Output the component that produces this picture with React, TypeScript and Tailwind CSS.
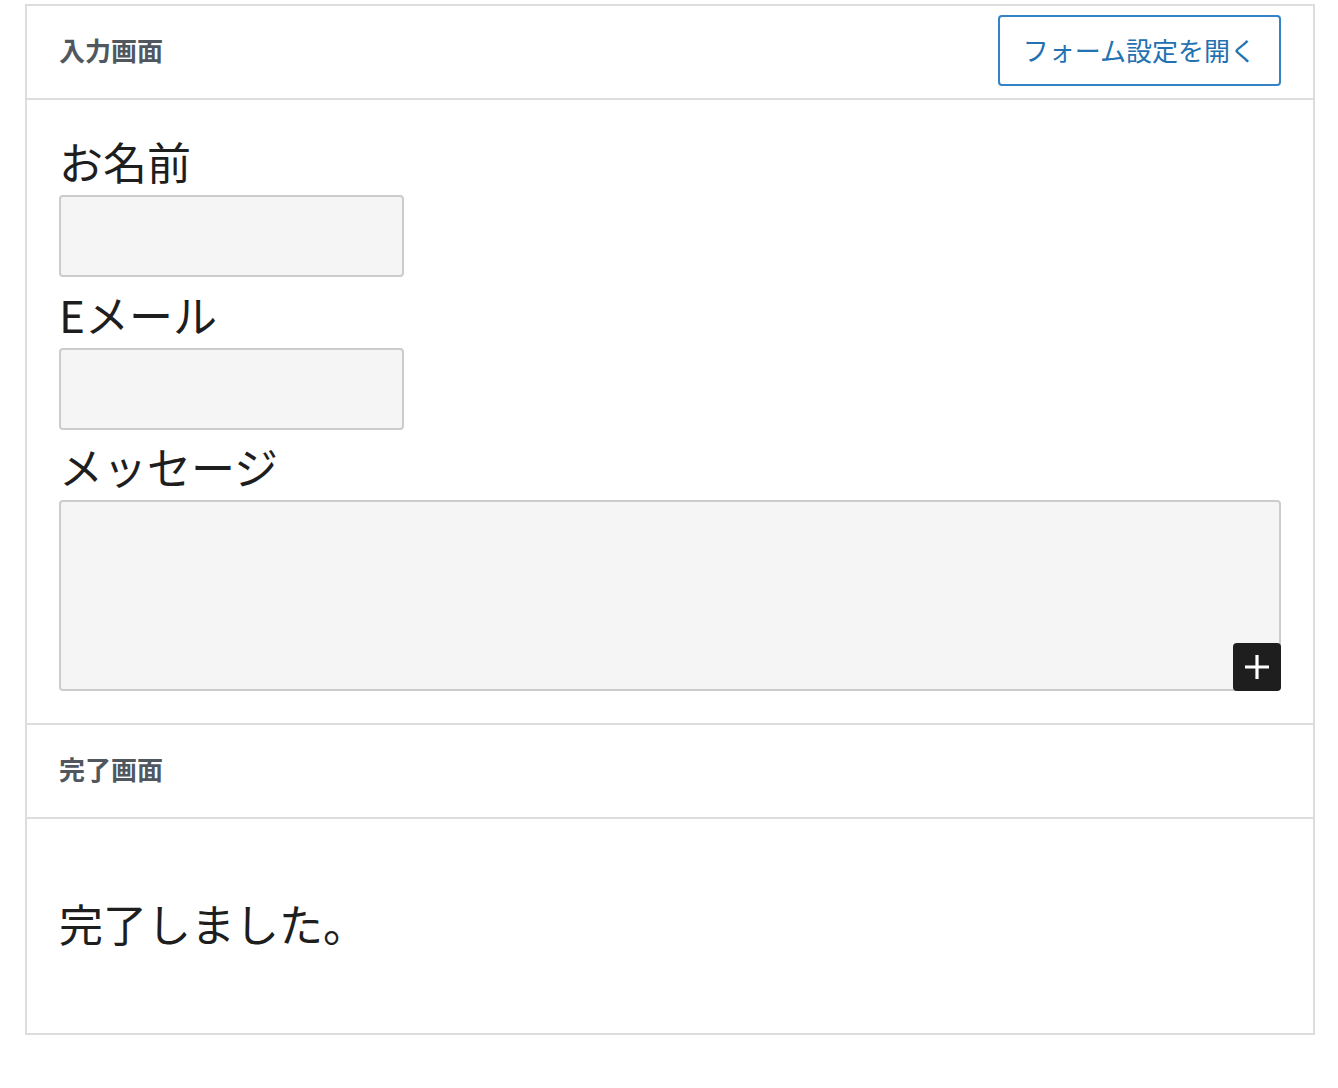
export default function App() {
  const font = { fontFamily: '"Noto Sans CJK JP", "Noto Sans", sans-serif' }
  return (
    <div className="min-h-[1088px] bg-white pl-[25px] pt-[4px]" style={font}>
      <div className="w-[1290px] border-2 border-[#dddddd] bg-white">
        {/* input screen */}
        <div className="flex h-[94px] items-center justify-between border-b-2 border-[#dddddd] pl-[32px] pr-[32px]">
          <h2 className="mb-[5px] text-[26px] font-bold text-[#50575e]">入力画面</h2>
          <button className="mb-[3px] h-[71px] rounded-[4px] border-2 border-[#3582c4] bg-white px-[23px] pb-[3px] text-[26px] text-[#2271b1]">
            フォーム設定を開く
          </button>
        </div>
        <div className="border-b-2 border-[#dddddd] pb-[32px] pl-[32px] pr-[32px] pt-[31px]">
          <label className="block pb-[4px] text-[44px] leading-[60px] text-[#1e1e1e]">お名前</label>
          <div className="mb-[7px] h-[82px] w-[345px] rounded-[4px] border-2 border-[#cccccc] bg-[#f5f5f5]" />
          <label className="block pb-[4px] text-[44px] leading-[60px] text-[#1e1e1e]">Eメール</label>
          <div className="mb-[6px] h-[82px] w-[345px] rounded-[4px] border-2 border-[#cccccc] bg-[#f5f5f5]" />
          <label className="block pb-[4px] text-[44px] leading-[60px] text-[#1e1e1e]">メッセージ</label>
          <div className="relative">
            <div className="h-[191px] w-full rounded-[4px] border-2 border-[#cccccc] bg-[#f5f5f5]" />
            <button className="absolute bottom-0 right-0 flex h-12 w-12 items-center justify-center rounded-[4px] bg-[#1e1e1e]">
              <svg viewBox="0 0 24 24" className="h-12 w-12" fill="#ffffff">
                <path d="M18 11.2h-5.2V6h-1.6v5.2H6v1.6h5.2V18h1.6v-5.2H18z" />
              </svg>
            </button>
          </div>
        </div>
        {/* complete screen */}
        <div className="flex h-[94px] items-center border-b-2 border-[#dddddd] pl-[32px] pr-[32px]">
          <h2 className="mb-[5px] text-[26px] font-bold text-[#50575e]">完了画面</h2>
        </div>
        <div className="flex h-[214px] items-center px-8">
          <p className="mb-[6px] text-[44px] text-[#1e1e1e]">完了しました。</p>
        </div>
      </div>
    </div>
  )
}
